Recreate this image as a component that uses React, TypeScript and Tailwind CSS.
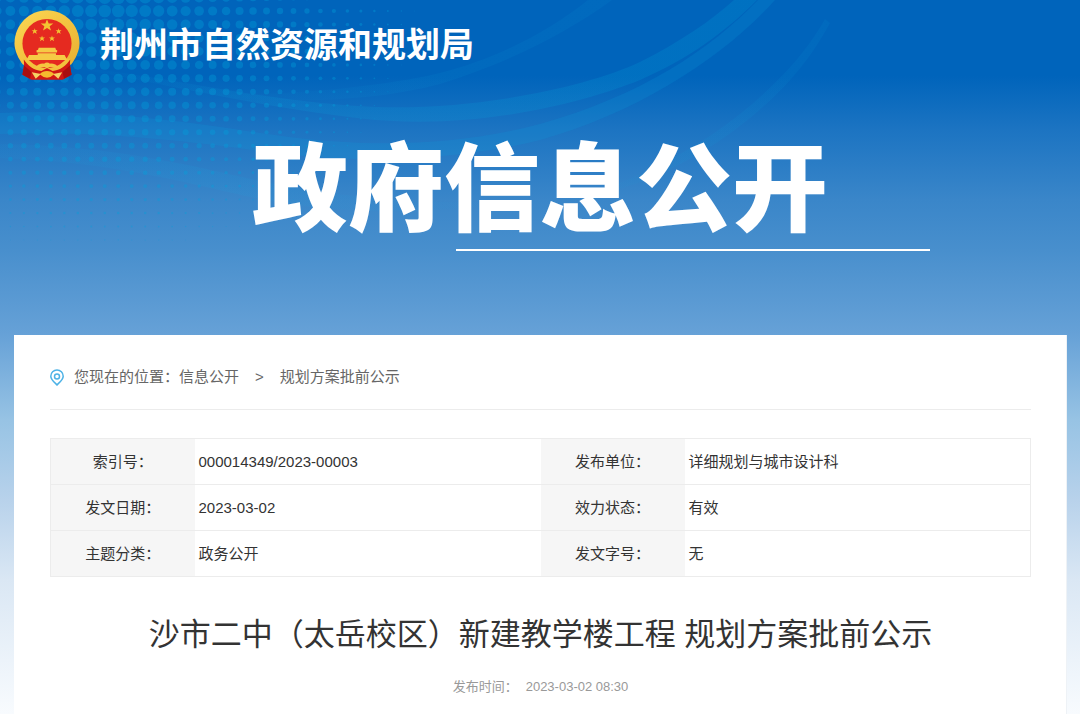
import React from "react";

type InfoCell = { label: string; value: string };

const infoRows: [InfoCell, InfoCell][] = [
  [
    { label: "索引号：", value: "000014349/2023-00003" },
    { label: "发布单位：", value: "详细规划与城市设计科" },
  ],
  [
    { label: "发文日期：", value: "2023-03-02" },
    { label: "效力状态：", value: "有效" },
  ],
  [
    { label: "主题分类：", value: "政务公开" },
    { label: "发文字号：", value: "无" },
  ],
];

// Halftone dots: largest near the upper left, fading to nothing outwards.
const dots: { x: number; y: number; r: number }[] = [];
for (let row = -1; row < 18; row++) {
  for (let col = -1; col < 32; col++) {
    const x = 10.4 + col * 13.48;
    const y = 11 + row * 13.47;
    const dx = (x - 115) / (x < 115 ? 420 : 320);
    const dy = y / 265;
    const r = 6.6 * (1 - Math.sqrt(dx * dx + dy * dy));
    if (r > 0.4) dots.push({ x, y, r });
  }
}

function Backdrop() {
  return (
    <svg
      aria-hidden="true"
      viewBox="0 0 1080 335"
      className="pointer-events-none absolute top-0 left-0 w-full"
    >
      <defs>
        <linearGradient id="fadeLeft" x1="0" x2="1">
          <stop offset="0" stopColor="#0aa5dc" stopOpacity="0" />
          <stop offset="0.3" stopColor="#0aa5dc" stopOpacity="0.16" />
          <stop offset="1" stopColor="#00a0d8" stopOpacity="0.22" />
        </linearGradient>
        <linearGradient id="fadeSoft" x1="0" x2="1">
          <stop offset="0" stopColor="#0aa5dc" stopOpacity="0" />
          <stop offset="0.5" stopColor="#0aa5dc" stopOpacity="0.09" />
          <stop offset="1" stopColor="#0aa5dc" stopOpacity="0.09" />
        </linearGradient>
        <linearGradient id="fadeBoth" x1="0" x2="1">
          <stop offset="0" stopColor="#18a5e0" stopOpacity="0.06" />
          <stop offset="0.4" stopColor="#18a5e0" stopOpacity="0.12" />
          <stop offset="1" stopColor="#18a5e0" stopOpacity="0" />
        </linearGradient>
      </defs>
      <g fill="#00a2dc" fillOpacity="0.36">
        {dots.map((d, i) => (
          <circle key={i} cx={d.x} cy={d.y} r={d.r} />
        ))}
      </g>
      <path
        fill="url(#fadeLeft)"
        d="M60 66C150 72 240 98 357 106C460 113 580 90 640 62C680 42 712 20 734 0H757C725 32 690 58 640 80C580 104 470 132 357 118C240 104 150 80 60 66Z"
      />
      <path
        fill="#0aa0dc"
        fillOpacity="0.18"
        d="M0 113C90 108 190 122 260 133C360 148 450 148 540 124C640 96 710 50 758 0H775C725 56 640 112 540 140C450 162 350 164 260 151C190 141 90 130 0 134Z"
      />
      <path
        fill="url(#fadeSoft)"
        d="M200 94C300 97 400 83 440 73C500 58 550 30 588 0H612C565 34 510 62 440 84C380 100 290 106 200 94Z"
      />
      <path
        fill="url(#fadeBoth)"
        d="M0 144C120 146 200 168 260 181C350 200 440 205 520 200C440 214 350 216 260 199C200 187 120 162 0 158Z"
      />
      <path
        fill="url(#fadeSoft)"
        d="M560 204C640 180 700 146 740 114C785 78 810 46 825 19L830 23C812 56 790 86 745 122C700 158 640 190 560 204Z"
      />
    </svg>
  );
}

function NationalEmblem() {
  return (
    <svg aria-label="国徽" role="img" viewBox="42 29 198 211" className="h-[70px] w-[66px] shrink-0">
      <defs>
        <linearGradient id="gold" x1="0" y1="0" x2="1" y2="1">
          <stop offset="0" stopColor="#fbd855" />
          <stop offset="0.5" stopColor="#f3c441" />
          <stop offset="1" stopColor="#e8b033" />
        </linearGradient>
      </defs>
      <path
        fill="url(#gold)"
        d="M141 30C194 30 239 74 239 130C239 150 228 176 213 194H69C54 176 43 150 43 130C43 74 88 30 141 30Z"
      />
      <path fill="#d01814" d="M71 179L211 179L210 192L215 224L188 239H94L67 224L72 192Z" />
      <path fill="#a80f10" d="M72 196L94 216L90 236L67 224ZM210 196L188 216L192 236L215 224Z" />
      <path fill="#f2c23d" d="M70 176C82 198 102 210 124 213L141 204L158 213C180 210 200 198 212 176Z" />
      <circle cx="141" cy="130" r="74" fill="#e52a20" />
      <g fill="#f3c332">
        <path d="M141 57l5 13h14l-11 8 4 13-12-8-12 8 4-13-11-8h14z" />
        <path d="M104 84l2 6h7l-5 4 2 7-6-4-6 4 2-7-5-4h7z" />
        <path d="M176 84l2 6h7l-5 4 2 7-6-4-6 4 2-7-5-4h7z" />
        <path d="M126 106l2 6h7l-5 4 2 7-6-4-6 4 2-7-5-4h7z" />
        <path d="M156 106l2 6h7l-5 4 2 7-6-4-6 4 2-7-5-4h7z" />
      </g>
      <g fill="#f6ca45">
        <path d="M116 143H166L168 149L172 151L171 157H110L109 151L114 149Z" />
        <path d="M113 159H168V165H194L202 180H79L87 165H113Z" />
      </g>
      <path
        fill="#f5c53f"
        d="M104 203C112 194 124 189 132 191Q141 184 150 191C158 189 170 194 178 203C168 204 156 203 149 201Q141 208 133 201C126 203 114 204 104 203Z"
      />
      <path fill="#f6d264" d="M95 217L123 222L107 236ZM187 217L159 222L175 236Z" />
      <path fill="#f5b92e" d="M119 223Q128 213 141 213Q154 213 163 223Q153 233 141 233Q129 233 119 223Z" />
    </svg>
  );
}

function LocationPin() {
  return (
    <svg aria-hidden="true" viewBox="0 0 14 17" className="h-[17px] w-[14px] shrink-0" fill="none" stroke="#4db2e6">
      <path strokeWidth="1.5" d="M7 15.9C5.6 14.2 .8 10.9 .8 7.2A6.2 6.2 0 0 1 13.2 7.2C13.2 10.9 8.4 14.2 7 15.9Z" />
      <circle cx="7" cy="7.4" r="2.5" strokeWidth="1.5" />
    </svg>
  );
}

export default function App() {
  return (
    <div
      lang="zh-CN"
      className="relative flex min-h-screen flex-col bg-[linear-gradient(180deg,#0064bb_0px,#0064bb_76px,#1c74c2_130px,#3a86c9_200px,#488fcd_250px,#66a1d7_334px,#97c3e4_420px,#b8d2eb_500px,#dae7f4_580px,#f8fbfe_714px)] font-['Liberation_Sans','Noto_Sans_CJK_SC',sans-serif] text-[#333]"
    >
      <Backdrop />

      <header className="relative flex h-[90px] items-center gap-5 px-3.5">
        <NationalEmblem />
        <p className="text-[34px] leading-[48px] font-bold text-white">荆州市自然资源和规划局</p>
      </header>

      <section className="relative flex h-[245px] flex-col pt-10">
        <h1 className="text-center text-[96px] leading-[119px] font-black text-white">政府信息公开</h1>
        <div className="flex justify-center pl-[306px]">
          <div className="h-0.5 w-[474px] bg-white" />
        </div>
      </section>

      <main className="relative mr-[13px] ml-3.5 flex-1 border-r border-[#eef2f6] bg-white pr-[35px] pb-4 pl-9">
        <nav
          aria-label="当前位置"
          className="flex h-[75px] items-center border-b border-[#ececec] pt-2.5 text-[15px] leading-6 text-[#666]"
        >
          <LocationPin />
          <span className="ml-2.5">您现在的位置：</span>
          <a href="#info">信息公开</a>
          <span className="mx-4">&gt;</span>
          <a href="#plans">规划方案批前公示</a>
        </nav>

        <table className="mt-7 w-full table-fixed border-collapse border border-[#ececec] text-[15px] leading-6">
          <colgroup>
            <col className="w-[144px]" />
            <col />
            <col className="w-[144px]" />
            <col />
          </colgroup>
          <tbody>
            {infoRows.map((row) => (
              <tr key={row[0].label} className="h-[46px] border-b border-[#ececec]">
                {row.map((cell) => (
                  <React.Fragment key={cell.label}>
                    <th scope="row" className="bg-[#f6f6f6] text-center font-normal">
                      {cell.label}
                    </th>
                    <td className="pl-1">{cell.value}</td>
                  </React.Fragment>
                ))}
              </tr>
            ))}
          </tbody>
        </table>

        <h2 className="mt-9 text-center text-[31px] leading-[44px]">
          沙市二中（太岳校区）新建教学楼工程 规划方案批前公示
        </h2>
        <p className="mt-[18px] text-center text-[13px] leading-6 text-[#999]">
          <span className="mr-2">发布时间：</span>
          <time dateTime="2023-03-02T08:30">2023-03-02 08:30</time>
        </p>
      </main>
    </div>
  );
}
